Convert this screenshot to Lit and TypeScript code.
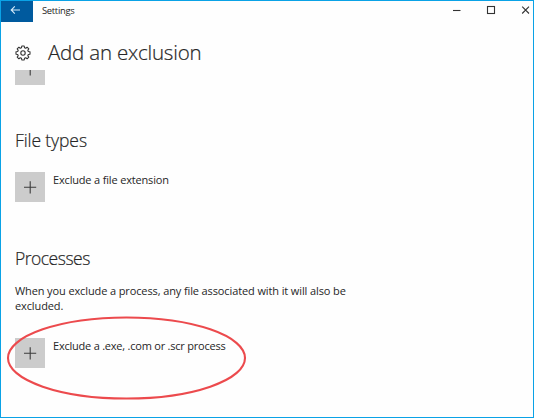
import { LitElement, html, css } from "lit";
import { customElement, property } from "lit/decorators.js";

@customElement("add-button")
class AddButton extends LitElement {
  @property() label = "";

  static styles = css`
    :host { display: flex; align-items: flex-start; gap: 8px; }
    .tile { width: 30px; height: 30px; background: #cccccc; flex: none; }
    .tile svg { display: block; }
    .label { font-size: 11px; line-height: 16px; white-space: nowrap; letter-spacing: var(--label-spacing, 0); }
  `;

  render() {
    return html`
      <div class="tile">
        <svg width="30" height="30" viewBox="0 0 30 30" fill="none" stroke="#3c3c3c" stroke-width="1.1">
          <path d="M9 15.3H21.2M15.2 9.2V21.4" />
        </svg>
      </div>
      <div class="label">${this.label}</div>
    `;
  }
}

@customElement("app-root")
class AppRoot extends LitElement {
  static styles = css`
    :host {
      display: block;
      position: relative;
      box-sizing: border-box;
      width: 534px;
      height: 418px;
      overflow: hidden;
      border: 1px solid #0aa2e6;
      background: #fefefe;
      color: #262626;
      font-family: "Open Sans", "Noto Sans", sans-serif;
    }
    .titlebar { display: flex; height: 21px; }
    .back { width: 32px; height: 21px; background: #005a9e; }
    .back svg, .controls svg, .gear { display: block; }
    .name { flex: 1; padding-left: 9px; font-size: 9.4px; line-height: 19px; letter-spacing: -0.3px; }
    .header { display: flex; align-items: center; height: 48px; padding: 0 14px; }
    .gear { flex: none; margin-top: 13px; }
    h1, h2 { font-weight: 300; white-space: nowrap; -webkit-text-stroke: 0.2px #262626; }
    h1 { margin: 0 0 0 17px; padding-top: 12px; font-size: 20.5px; line-height: 28px; letter-spacing: -0.2px; }
    .clipped { width: 30px; height: 15px; margin-left: 14px; background: #cccccc; }
    .clipped svg { display: block; }
    h2 { margin: 0 0 0 14px; font-size: 17.5px; line-height: 24px; }
    .types { margin-top: 43px; letter-spacing: -0.1px; }
    add-button { margin-left: 14px; }
    .extension { margin-top: 20px; --label-spacing: -0.17px; }
    .processes { margin-top: 44px; letter-spacing: -0.5px; }
    p { margin: 13px 0 0 14px; width: 350px; font-size: 11px; line-height: 15px; letter-spacing: -0.115px; }
    .process { margin-top: 25px; --label-spacing: -0.22px; }
    .mark { position: absolute; left: 0; top: 309px; }
  `;

  render() {
    return html`
      <div class="titlebar">
        <div class="back">
          <svg width="32" height="21" viewBox="0 0 32 21" fill="none" stroke="#d8ecfa" stroke-width="1.1">
            <path d="M10.2 9H19M13.8 5.3L10.2 9L13.8 12.7" />
          </svg>
        </div>
        <div class="name">Settings</div>
        <div class="controls">
          <svg width="84" height="21" viewBox="0 0 84 21" fill="none" stroke="#333" stroke-width="1.1">
            <path d="M4 9.5H11.5" />
            <rect x="38.5" y="5.5" width="7" height="7" />
            <path d="M73.2 5.7L80 12.5M80 5.7L73.2 12.5" />
          </svg>
        </div>
      </div>
      <div class="header">
        <svg class="gear" width="16" height="16" viewBox="0 0 16 16" fill="none" stroke="#333" stroke-width="1.1" stroke-linejoin="round">
          <path d="M6.5 2.7L6.8 1H9.2L9.5 2.7L10.7 3.2L12.1 2.2L13.8 3.9L12.8 5.3L13.3 6.5L15 6.8V9.2L13.3 9.5L12.8 10.7L13.8 12.1L12.1 13.8L10.7 12.8L9.5 13.3L9.2 15H6.8L6.5 13.3L5.3 12.8L3.9 13.8L2.2 12.1L3.2 10.7L2.7 9.5L1 9.2V6.8L2.7 6.5L3.2 5.3L2.2 3.9L3.9 2.2L5.3 3.2Z" />
          <circle cx="8" cy="8" r="2.2" />
        </svg>
        <h1>Add an exclusion</h1>
      </div>
      <div class="clipped">
        <svg width="30" height="15" viewBox="0 0 30 15" stroke="#3c3c3c" stroke-width="1.1">
          <path d="M15.2 0V5.6" />
        </svg>
      </div>
      <h2 class="types">File types</h2>
      <add-button class="extension" label="Exclude a file extension"></add-button>
      <h2 class="processes">Processes</h2>
      <p>When you exclude a process, any file associated with it will also be excluded.</p>
      <add-button class="process" label="Exclude a .exe, .com or .scr process"></add-button>
      <svg class="mark" width="260" height="96" viewBox="0 0 260 96" fill="none" stroke="#ec4a4d" stroke-width="2.1">
        <ellipse cx="125.5" cy="48" rx="118.5" ry="40.5" />
      </svg>
    `;
  }
}
